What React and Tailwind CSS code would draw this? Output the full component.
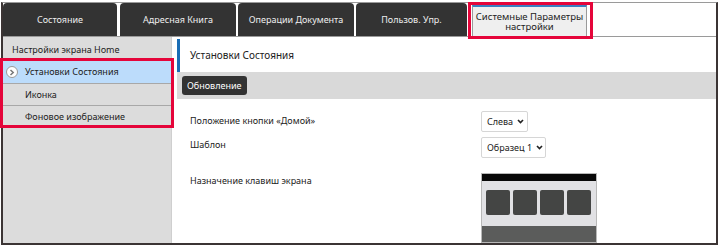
import React from "react";

const font = { fontFamily: '"Noto Sans", "Open Sans", sans-serif' };

function Tab({ w, children }) {
  return (
    <div
      className={`${w} h-[33px] bg-[#333333] rounded-t-[4px] flex items-center justify-center text-[9px] text-[#eeeeee] shrink-0 whitespace-nowrap`}
    >
      {children}
    </div>
  );
}

function Chevron() {
  return (
    <svg width="7" height="5" viewBox="0 0 7 5" className="ml-[4px]">
      <path d="M1 1 L3.5 3.6 L6 1" stroke="#222" strokeWidth="1.6" fill="none" />
    </svg>
  );
}

function Select({ w, children }) {
  return (
    <div
      className={`${w} h-[21px] border border-[#d6d6d6] rounded-[2px] bg-white flex items-center pl-[5px] text-[9px] text-[#222] whitespace-nowrap`}
    >
      {children}
      <Chevron />
    </div>
  );
}

export default function App() {
  return (
    <div className="w-[719px] h-[246px] bg-white relative overflow-hidden" style={font}>
      <div className="ml-[1px] mt-[2px] w-[717px] h-[243px] border-l-2 border-r-2 border-b-2 border-t border-[#3b3434] border-t-[#9a9a9a] flex flex-col">
        {/* tabs */}
        <div className="flex items-end h-[34px] border-b border-[#9a9a9a]">
          <Tab w="w-[114px]">Состояние</Tab>
          <div className="w-[3px]" />
          <Tab w="w-[116px]">Адресная Книга</Tab>
          <div className="w-[2px]" />
          <Tab w="w-[116px]">Операции Документа</Tab>
          <div className="w-[2px]" />
          <Tab w="w-[111px]">Пользов. Упр.</Tab>
          <div className="w-[5px]" />
          <div className="w-[115px] h-[31px] bg-[#efefef] border-t-2 border-[#3a7fc1] border-l border-r border-l-[#9a9a9a] border-r-[#9a9a9a] flex items-center justify-center text-center text-[9.5px] leading-[10px] text-[#222] shrink-0 whitespace-nowrap">
            <p>
              Системные Параметры
              <br />
              настройки
            </p>
          </div>
        </div>
        {/* body */}
        <div className="flex flex-1 min-h-0">
          <div className="w-[169px] bg-[#dcdcdc] flex flex-col text-[9px] text-[#222] border-r border-[#cfcfcf] whitespace-nowrap pt-[2px]">
            <div className="h-[21px] flex items-center pl-[9px]">Настройки экрана Home</div>
            <div className="h-[23px] mt-[1px] bg-[#bcdcfb] flex items-center border-b border-[#a8a8a8] relative">
              <div className="absolute left-[3px] top-[5px] w-[12px] h-[12px] rounded-full bg-white border border-[#9a9a9a] flex items-center justify-center">
                <svg width="6" height="7" viewBox="0 0 6 7">
                  <path d="M1.5 1 L4.2 3.5 L1.5 6" stroke="#777" strokeWidth="1.5" fill="none" />
                </svg>
              </div>
              <span className="pl-[22px]">Установки Состояния</span>
            </div>
            <div className="h-[22px] flex items-center border-b border-[#a8a8a8] pl-[22px]">Иконка</div>
            <div className="h-[21px] flex items-center pl-[22px]">Фоновое изображение</div>
          </div>
          <div className="flex-1 ml-[5px] mt-[2px] flex flex-col">
            <div className="h-[33px] border-l-[3px] border-[#1a6db5] flex items-center pl-[10px] text-[10px] text-[#222] whitespace-nowrap">
              Установки Состояния
            </div>
            <div className="h-[27px] bg-[#d9d9d9] flex items-center pl-[5px]">
              <div className="h-[19px] px-[5px] bg-[#333333] rounded-[3px] text-white text-[9px] flex items-center">
                Обновление
              </div>
            </div>
            <div className="grid grid-cols-[291px_1fr] pl-[13px] text-[9px] text-[#222] mt-[12px] whitespace-nowrap">
              <div className="pt-[3px]">Положение кнопки «Домой»</div>
              <Select w="w-[47px]">Слева</Select>
              <div className="pt-[1px] mt-[5px]">Шаблон</div>
              <div className="mt-[5px]">
                <Select w="w-[65px]">Образец 1</Select>
              </div>
              <div className="mt-[15px] pt-[1px]">Назначение клавиш экрана</div>
              <div className="mt-[15px] w-[116px] h-[70px] border border-[#b8b8b8] bg-[#e1e1e4] flex flex-col">
                <div className="h-[7px] bg-[#080808]" />
                <div className="flex gap-[3px] px-[4px] mt-[9px]">
                  <div className="w-[24px] h-[25px] bg-[#444544] rounded-[2px]" />
                  <div className="w-[24px] h-[25px] bg-[#444544] rounded-[2px]" />
                  <div className="w-[24px] h-[25px] bg-[#444544] rounded-[2px]" />
                  <div className="w-[24px] h-[25px] bg-[#444544] rounded-[2px]" />
                </div>
                <div className="mt-auto h-[16px] bg-[#5b5c5b]" />
              </div>
            </div>
          </div>
        </div>
      </div>
      {/* red highlight boxes */}
      <div className="absolute left-[468px] top-[2px] w-[125px] h-[37px] border-[3px] border-[#e5053a] pointer-events-none" />
      <div className="absolute left-[0px] top-[58px] w-[174px] h-[70px] border-[3px] border-[#e5053a] pointer-events-none" />
    </div>
  );
}
